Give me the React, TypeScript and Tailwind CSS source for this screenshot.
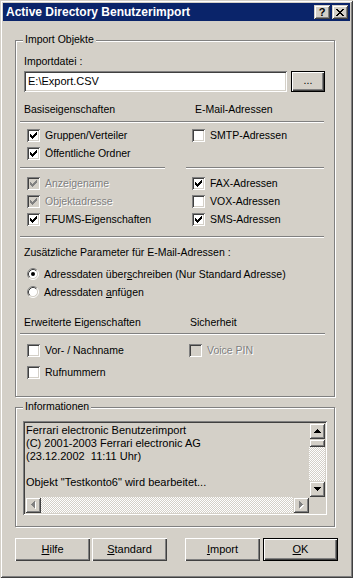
import React from 'react';

const raised = 'shadow-[inset_1px_1px_#fff,inset_-1px_-1px_#404040,inset_-2px_-2px_#808080]';
const raisedSb = 'shadow-[inset_1px_1px_#d4d0c8,inset_-1px_-1px_#404040,inset_2px_2px_#fff,inset_-2px_-2px_#808080]';
const sunken = 'shadow-[inset_1px_1px_#808080,inset_-1px_-1px_#fff,inset_2px_2px_#404040,inset_-2px_-2px_#d4d0c8]';

const CHECK_PX: [number, number, number][] = [
  [6, 0, 1], [5, 1, 2], [0, 2, 1], [4, 2, 3], [0, 3, 2], [3, 3, 3], [0, 4, 5], [1, 5, 3], [2, 6, 1],
];

function Check({ checked, disabled }: { checked?: boolean; disabled?: boolean }) {
  return (
    <span className={`relative block w-[13px] h-[13px] shrink-0 ${sunken} ${disabled ? 'bg-[#d4d0c8]' : 'bg-white'}`}>
      {checked && (
        <svg className="absolute left-[3px] top-[3px]" width="7" height="7" viewBox="0 0 7 7" shapeRendering="crispEdges">
          {CHECK_PX.map(([x, y, w], i) => (
            <rect key={i} x={x} y={y} width={w} height={1} fill={disabled ? '#808080' : '#000'} />
          ))}
        </svg>
      )}
    </span>
  );
}

function Radio({ checked }: { checked?: boolean }) {
  return (
    <svg width="12" height="12" viewBox="0 0 12 12" className="shrink-0">
      <circle cx="6" cy="6" r="4.5" fill="#fff" />
      <path d="M2.11 9.89 A5.5 5.5 0 0 1 9.89 2.11" stroke="#808080" fill="none" />
      <path d="M9.89 2.11 A5.5 5.5 0 0 1 2.11 9.89" stroke="#fff" fill="none" />
      <path d="M2.82 9.18 A4.5 4.5 0 0 1 9.18 2.82" stroke="#404040" fill="none" />
      <path d="M9.18 2.82 A4.5 4.5 0 0 1 2.82 9.18" stroke="#d4d0c8" fill="none" />
      {checked && <circle cx="6" cy="6" r="2" fill="#000" />}
    </svg>
  );
}

function CheckRow({ label, checked, disabled, h = 'h-[18px]', pl = 'pl-[7px]' }: { label: string; checked?: boolean; disabled?: boolean; h?: string; pl?: string }) {
  return (
    <div className={`flex items-center gap-[5px] ${h} ${pl}`}>
      <Check checked={checked} disabled={disabled} />
      <span className={disabled ? 'text-[#808080] [text-shadow:1px_1px_0_#fff]' : ''}>{label}</span>
    </div>
  );
}

function Sep({ w }: { w: string }) {
  return <div className={`h-[2px] border-t border-b border-t-[#808080] border-b-white ${w}`} />;
}

function Arrow({ dir, disabled }: { dir: 'up' | 'down' | 'left' | 'right'; disabled?: boolean }) {
  const rows = [[3, 1], [2, 3], [1, 5], [0, 7]];
  const fill = disabled ? '#808080' : '#000';
  if (dir === 'up' || dir === 'down') {
    return (
      <svg width="7" height="4" viewBox="0 0 7 4" shapeRendering="crispEdges">
        {rows.map(([x, w], i) => (
          <rect key={i} x={x} y={dir === 'up' ? i : 3 - i} width={w} height={1} fill={fill} />
        ))}
      </svg>
    );
  }
  return (
    <svg width="5" height="8" viewBox="0 0 5 8" shapeRendering="crispEdges">
      {disabled &&
        rows.map(([y, h], i) => (
          <rect key={'s' + i} x={(dir === 'left' ? i : 3 - i) + 1} y={y + 1} width={1} height={h} fill="#fff" />
        ))}
      {rows.map(([y, h], i) => (
        <rect key={i} x={dir === 'left' ? i : 3 - i} y={y} width={1} height={h} fill={fill} />
      ))}
    </svg>
  );
}

function SbButton({ dir, disabled }: { dir: 'up' | 'down' | 'left' | 'right'; disabled?: boolean }) {
  return (
    <div className={`w-[16px] h-[16px] shrink-0 bg-[#d4d0c8] flex items-center justify-center ${raisedSb}`}>
      <Arrow dir={dir} disabled={disabled} />
    </div>
  );
}

function Button({ children, def }: { children: React.ReactNode; def?: boolean }) {
  return (
    <div className={`w-[75px] h-[23px] flex items-center justify-center bg-[#d4d0c8] ${def ? 'border border-black' : ''} ${raised}`}>
      {children}
    </div>
  );
}

function Group({ label, className, children }: { label: string; className?: string; children: React.ReactNode }) {
  return (
    <div className={`relative ml-[12px] w-[320px] border border-[#808080] shadow-[1px_1px_0_#fff,inset_1px_1px_0_#fff] ${className ?? ''}`}>
      <span className="absolute -top-[8px] left-[7px] px-[2px] bg-[#d4d0c8] leading-[13px]">{label}</span>
      {children}
    </div>
  );
}

const checker = 'bg-[repeating-conic-gradient(#d4d0c8_0%_25%,#fff_0%_50%)] bg-[length:2px_2px]';

export default function App() {
  return (
    <div className={`w-[353px] h-[578px] p-[3px] bg-[#d4d0c8] text-black text-[10.5px] leading-[13px] [font-family:'Liberation_Sans',Arial,sans-serif] ${raisedSb}`}>
      {/* Title bar */}
      <div className="h-[18px] bg-[#0a246a] flex items-center pl-[3px] pr-[2px]">
        <span className="flex-1 text-white font-bold text-[12px]">Active Directory Benutzerimport</span>
        <div className={`w-[16px] h-[14px] bg-[#d4d0c8] flex items-center justify-center font-bold text-[11px] leading-none ${raisedSb}`}>?</div>
        <div className={`ml-[2px] w-[16px] h-[14px] bg-[#d4d0c8] flex items-center justify-center ${raisedSb}`}>
          <svg width="8" height="7" viewBox="0 0 8 7" shapeRendering="crispEdges">
            {[[0, 0], [6, 0], [1, 1], [5, 1], [2, 2], [4, 2], [3, 3], [2, 4], [4, 4], [1, 5], [5, 5], [0, 6], [6, 6]].map(([x, y], i) => (
              <rect key={i} x={x} y={y} width={2} height={1} fill="#000" />
            ))}
          </svg>
        </div>
      </div>

      {/* Import Objekte */}
      <Group label="Import Objekte" className="mt-[19px] px-[4px] pb-[13px]">
        <div className="mt-[14px] pl-[4px]">Importdatei :</div>
        <div className="mt-[3px] pl-[4px] flex">
          <div className={`w-[263px] h-[21px] bg-white flex items-center pl-[4px] text-[11px] ${sunken}`}>E:\Export.CSV</div>
          <div className="ml-[4px]">
            <div className={`w-[34px] h-[21px] border border-black bg-[#d4d0c8] flex items-center justify-center pb-[3px] ${raised}`}>...</div>
          </div>
        </div>

        <div className="mt-[11px] flex">
          <div className="w-[166px] pl-[4px]">Basiseigenschaften</div>
          <div className="pl-[9px]">E-Mail-Adressen</div>
        </div>
        <div className="mt-[5px]"><Sep w="w-[304px]" /></div>

        <div className="mt-[3px] flex">
          <div className="w-[166px]">
            <CheckRow label="Gruppen/Verteiler" checked />
            <CheckRow label="Öffentliche Ordner" checked />
          </div>
          <div>
            <CheckRow label="SMTP-Adressen" pl="pl-[6px]" />
          </div>
        </div>

        <div className="mt-[5px] flex">
          <Sep w="w-[145px]" />
          <div className="ml-[21px]"><Sep w="w-[138px]" /></div>
        </div>

        <div className="mt-[5px] flex">
          <div className="w-[166px]">
            <CheckRow label="Anzeigename" checked disabled />
            <CheckRow label="Objektadresse" checked disabled />
            <CheckRow label="FFUMS-Eigenschaften" checked />
          </div>
          <div>
            <CheckRow label="FAX-Adressen" checked pl="pl-[6px]" />
            <CheckRow label="VOX-Adressen" pl="pl-[6px]" />
            <CheckRow label="SMS-Adressen" checked pl="pl-[6px]" />
          </div>
        </div>

        <div className="mt-[8px]"><Sep w="w-[304px]" /></div>

        <div className="mt-[8px] pl-[4px]">Zusätzliche Parameter für E-Mail-Adressen :</div>
        <div className="mt-[6px]">
          <div className="h-[18px] flex items-center gap-[5px] pl-[7px]">
            <Radio checked />
            <span>Adressdaten über<span className="underline">s</span>chreiben (Nur Standard Adresse)</span>
          </div>
          <div className="h-[18px] flex items-center gap-[5px] pl-[7px]">
            <Radio />
            <span>Adressdaten <span className="underline">a</span>nfügen</span>
          </div>
        </div>

        <div className="mt-[15px] flex">
          <div className="w-[166px] pl-[4px]">Erweiterte Eigenschaften</div>
          <div className="pl-[4px]">Sicherheit</div>
        </div>
        <div className="mt-[4px]"><Sep w="w-[305px]" /></div>

        <div className="mt-[4px] flex">
          <div className="w-[166px]">
            <CheckRow label="Vor- / Nachname" h="h-[22px]" />
            <CheckRow label="Rufnummern" h="h-[22px]" />
          </div>
          <div>
            <CheckRow label="Voice PIN" disabled h="h-[22px]" pl="pl-[3px]" />
          </div>
        </div>
      </Group>

      {/* Informationen */}
      <Group label="Informationen" className="mt-[10px] pl-[7px] pt-[13px] pb-[11px]">
        <div className={`w-[304px] h-[94px] bg-[#d4d0c8] p-[2px] flex flex-col text-[11px] ${sunken}`}>
          <div className="flex flex-1 min-h-0">
            <div className="flex-1 pl-[1px] pt-[1px] whitespace-pre">
              <div>Ferrari electronic Benutzerimport</div>
              <div>(C) 2001-2003 Ferrari electronic AG</div>
              <div>(23.12.2002  11:11 Uhr)</div>
              <div>&nbsp;</div>
              <div>Objekt "Testkonto6" wird bearbeitet...</div>
            </div>
            <div className="w-[16px] flex flex-col">
              <SbButton dir="up" />
              <div className={`h-[8px] bg-[#d4d0c8] ${raisedSb}`} />
              <div className={`flex-1 ${checker}`} />
              <SbButton dir="down" />
            </div>
          </div>
          <div className="h-[16px] flex">
            <SbButton dir="left" disabled />
            <div className={`flex-1 ${checker}`} />
            <SbButton dir="right" disabled />
            <div className="w-[16px] bg-[#d4d0c8]" />
          </div>
        </div>
      </Group>

      {/* Buttons */}
      <div className="mt-[11px] ml-[12px] flex text-[11px]">
        <Button><span><span className="underline">H</span>ilfe</span></Button>
        <div className="ml-[2px]"><Button><span><span className="underline">S</span>tandard</span></Button></div>
        <div className="ml-[18px]"><Button><span><span className="underline">I</span>mport</span></Button></div>
        <div className="ml-[3px]"><Button def><span><span className="underline">O</span>K</span></Button></div>
      </div>
    </div>
  );
}
